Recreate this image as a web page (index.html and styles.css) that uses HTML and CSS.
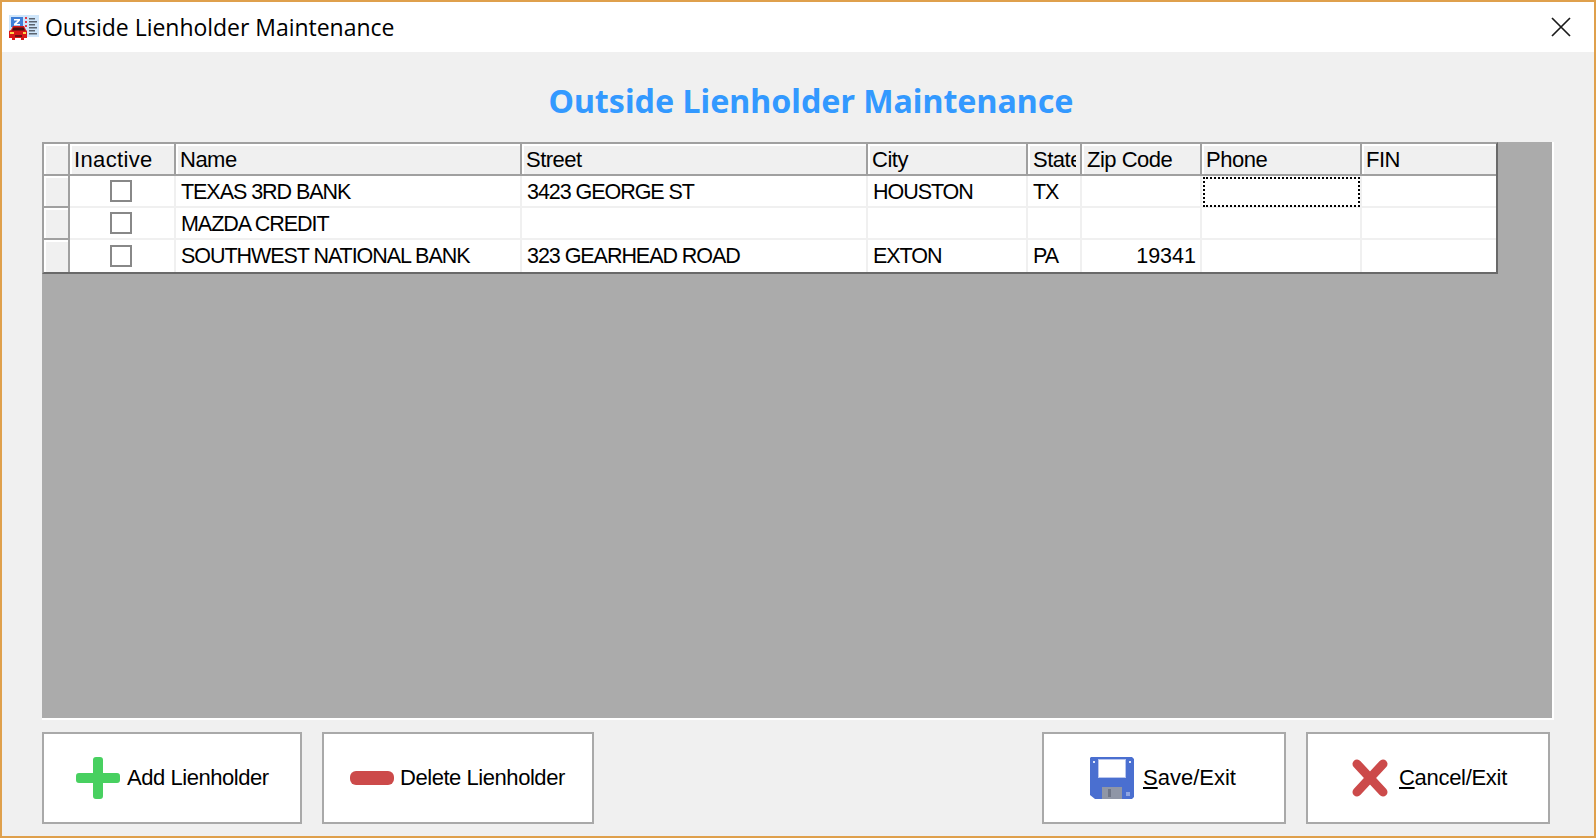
FILE: index.html
```html
<!DOCTYPE html>
<html lang="en">
<head>
<meta charset="utf-8">
<title>Outside Lienholder Maintenance</title>
<link rel="stylesheet" href="styles.css">
</head>
<body>
<div class="window">
  <header class="titlebar">
    <svg class="app-icon" viewBox="0 0 30 25" width="30" height="25">
      <rect x="0" y="0" width="30" height="22" fill="#cfe6fb"/>
      <rect x="2" y="2" width="12" height="10" fill="#3f7fd8"/>
      <path d="M5 4h6v1.6L7.6 9H11v1.4H5V8.8L8.6 5.4H5z" fill="#fff"/>
      <path d="M16 2h2v2h-2zM16 6h2v2h-2zM16 10h2v2h-2z" fill="#e03a4a"/>
      <path d="M20 3h6v1.5h-6zM20 6h8v1.5h-8zM20 9h6v1.5h-6zM20 12h8v1.5h-8zM20 15h6v1.5h-6zM20 18h8v1.5h-8z" fill="#5a6470"/>
      <path d="M4 11h11l2 4 1 1v7h-3v2h-3v-2H6v2H3v-2H0v-7l2-1z" fill="#d81818"/>
      <path d="M4.500 12.500h10l1.500 3H3z" fill="#4a1010"/>
      <rect x="1" y="17" width="4" height="2" fill="#ffd24a"/>
      <rect x="14" y="17" width="3" height="2" fill="#ffd24a"/>
      <rect x="6" y="20" width="7" height="2" fill="#701010"/>
    </svg>
    <h1 class="window-title">Outside Lienholder Maintenance</h1>
    <svg class="close-icon" viewBox="0 0 20 20" width="20" height="20"><path d="M1 1l18 18M19 1L1 19" stroke="#1a1a1a" stroke-width="1.700" fill="none"/></svg>
  </header>
  <main class="content">
    <h2 class="heading">Outside Lienholder Maintenance</h2>
    <section class="panel">
      <div class="grid">
        <div class="hc"></div><div class="hc hc-wide">Inactive</div><div class="hc">Name</div><div class="hc">Street</div><div class="hc">City</div><div class="hc hc-shift"><span class="clip">State</span></div><div class="hc hc-shift">Zip Code</div><div class="hc">Phone</div><div class="hc last">FIN</div>

        <div class="rh"></div><div class="c chk"><span class="box"></span></div><div class="c">TEXAS 3RD BANK</div><div class="c">3423 GEORGE ST</div><div class="c">HOUSTON</div><div class="c">TX</div><div class="c num"></div><div class="c focus"><span class="ring"></span></div><div class="c last"></div>

        <div class="rh"></div><div class="c chk"><span class="box"></span></div><div class="c">MAZDA CREDIT</div><div class="c"></div><div class="c"></div><div class="c"></div><div class="c num"></div><div class="c"></div><div class="c last"></div>

        <div class="rh end"></div><div class="c chk end"><span class="box"></span></div><div class="c end">SOUTHWEST NATIONAL BANK</div><div class="c end">323 GEARHEAD ROAD</div><div class="c end">EXTON</div><div class="c end">PA</div><div class="c num end">19341</div><div class="c end"></div><div class="c last end"></div>
      </div>
    </section>
    <footer class="actions">
      <div class="group">
        <button class="btn btn-add" type="button">
          <svg viewBox="0 0 44 42" width="44" height="42"><path d="M17 3a3 3 0 0 1 3-3h4a3 3 0 0 1 3 3v13h14a3 3 0 0 1 3 3v4a3 3 0 0 1-3 3H27v13a3 3 0 0 1-3 3h-4a3 3 0 0 1-3-3V26H3a3 3 0 0 1-3-3v-4a3 3 0 0 1 3-3h14z" fill="#48d060"/></svg>
          <span>Add Lienholder</span>
        </button>
        <button class="btn btn-del" type="button">
          <svg viewBox="0 0 44 14" width="44" height="14"><rect width="44" height="14" rx="6" fill="#cc4a4a"/></svg>
          <span>Delete Lienholder</span>
        </button>
      </div>
      <div class="group">
        <button class="btn btn-save" type="button">
          <svg viewBox="0 0 44 42" width="44" height="42">
            <path d="M1 0h41l2 2v38l-2 2H5l-5-4V1z" fill="#4a6fd0"/>
            <rect x="8" y="2" width="28" height="19" fill="#b9c6ee"/>
            <rect x="9" y="3" width="26" height="17" fill="#fff"/>
            <rect x="3" y="4" width="2" height="2" fill="#dfe6f8"/>
            <rect x="39" y="4" width="2" height="2" fill="#dfe6f8"/>
            <rect x="12" y="30" width="20" height="12" fill="#8f96a6"/>
            <rect x="18" y="32" width="3" height="8" fill="#6f7686"/>
            <rect x="36" y="35" width="4" height="4" fill="#8fa5e2"/>
          </svg>
          <span><u>S</u>ave/Exit</span>
        </button>
        <button class="btn btn-cancel" type="button">
          <svg viewBox="0 0 36 38" width="36" height="38"><path d="M5 5l26 28M31 5L5 33" stroke="#cc4a4a" stroke-width="9" stroke-linecap="round" fill="none"/></svg>
          <span><u>C</u>ancel/Exit</span>
        </button>
      </div>
    </footer>
  </main>
</div>
</body>
</html>
```
FILE: styles.css
```css
* { box-sizing: border-box; }
html, body { margin: 0; padding: 0; }
body { width: 1596px; height: 838px; overflow: hidden; background: #f0f0f0; }
.window {
  width: 1596px; height: 838px;
  border: 2px solid #dfa04c;
  display: flex; flex-direction: column;
  background: #f0f0f0;
  color: #000;
}
.titlebar {
  height: 50px; flex: none;
  background: #fff;
  display: flex; align-items: center;
  padding: 0 23px 0 7px;
}
.app-icon { flex: none; margin-right: 6px; margin-top: 1px; }
.window-title {
  flex: 1;
  margin: 0;
  font: 400 23px/1 "Open Sans", sans-serif;
  letter-spacing: -0.03px;
}
.close-icon { flex: none; }
.content { flex: 1; display: flex; flex-direction: column; padding: 0 40px; }
.heading {
  height: 90px; margin: 0;
  display: flex; align-items: center; justify-content: center;
  font: 700 32.200px/1 "Noto Sans", sans-serif;
  color: #3399ff;
  padding: 8px 0 0 26px;
}
.panel {
  width: 1512px; height: 578px; flex: none;
  background: #ababab;
  border-right: 2px solid #fff;
  border-bottom: 2px solid #fff;
}
.grid {
  width: 1456px;
  display: grid;
  grid-template-columns: 26px 106px 346px 346px 160px 54px 120px 160px 134px;
  grid-auto-rows: 32px;
  border: 2px solid #a0a0a0;
  border-right-color: #696969;
  border-bottom-color: #696969;
  background: #fff;
  font: 400 21.500px/32px "Liberation Sans", sans-serif;
  letter-spacing: -1.050px;
}
.hc, .c, .rh { overflow: hidden; white-space: nowrap; padding: 0 4px 0 5px; }
.hc {
  background: #f0f0f0;
  border-right: 2px solid #a0a0a0;
  border-bottom: 2px solid #a0a0a0;
  box-shadow: inset 2px 2px 0 #fff;
  padding-left: 4px;
  font-size: 22px;
  letter-spacing: -0.5px;
}
.hc-wide { letter-spacing: 0.35px; }
.hc-shift { padding-left: 5px; }
.clip { display: block; overflow: hidden; }
.rh {
  background: #f0f0f0;
  border-right: 2px solid #a0a0a0;
  border-bottom: 2px solid #a0a0a0;
  box-shadow: inset 2px 2px 0 #fff;
}
.c { background: #fff; border-right: 2px solid #f0f0f0; border-bottom: 2px solid #f0f0f0; }
.last { border-right: 0; }
.end { border-bottom: 0; }
.num { text-align: right; letter-spacing: 0; }
.chk { display: flex; align-items: center; justify-content: center; padding: 0 2px 0 0; }
.box { display: block; width: 22px; height: 22px; border: 2px solid #888; background: #fff; }
.focus { overflow: visible; padding: 1px 0 0 1px; }
.ring { display: block; height: 30px; border: 2px dotted #000; }
.actions { display: flex; justify-content: space-between; margin-top: 12px; padding-right: 4px; }
.group { display: flex; gap: 20px; }
.btn {
  height: 92px;
  background: #fff;
  border: 2px solid #a9a9a9;
  display: flex; align-items: center; gap: 7px;
  font: 400 22px/1 "Liberation Sans", sans-serif;
  letter-spacing: -0.45px;
  color: #000;
  padding: 0;
}
.btn-add { width: 260px; padding-left: 32px; }
.btn-del { width: 272px; padding-left: 26px; gap: 6px; }
.btn-save { width: 244px; padding-left: 46px; gap: 9px; letter-spacing: 0; }
.btn-cancel { width: 244px; padding-left: 44px; gap: 11px; letter-spacing: -0.3px; }
.btn span { white-space: nowrap; }
```
